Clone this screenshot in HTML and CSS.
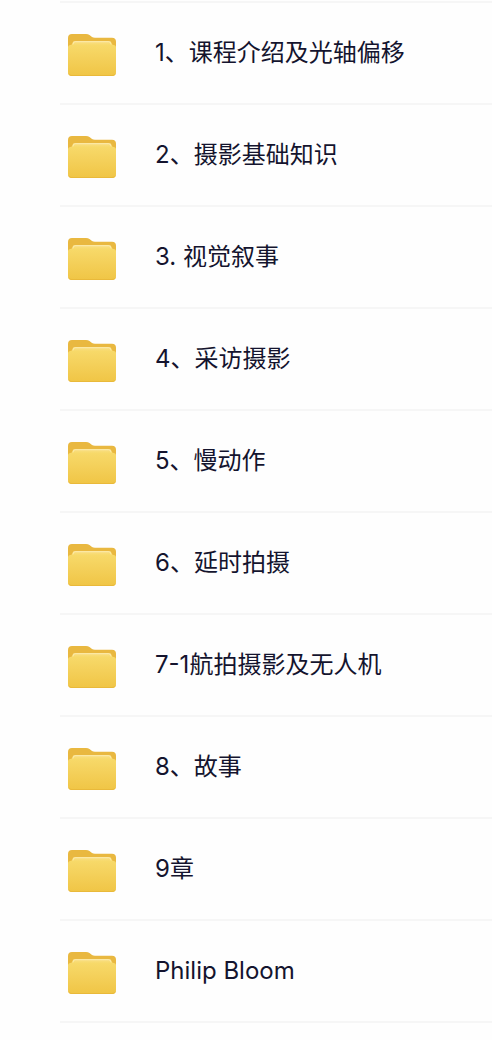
FILE: index.html
```html
<!DOCTYPE html>
<html lang="zh-CN">
<head>
<meta charset="utf-8">
<meta name="viewport" content="width=device-width, initial-scale=1">
<title>课程文件夹</title>
<link rel="stylesheet" href="styles.css">
</head>
<body>
<svg class="defs" width="0" height="0" aria-hidden="true">
  <defs>
    <linearGradient id="front" x1="0" y1="0" x2="0" y2="1">
      <stop offset="0" stop-color="#f9e08a"/>
      <stop offset="0.12" stop-color="#f7d969"/>
      <stop offset="0.5" stop-color="#f4d05a"/>
      <stop offset="1" stop-color="#f0c545"/>
    </linearGradient>
    <symbol id="folder" viewBox="0 0 48 46">
      <path fill="#e9b840" d="M0 8Q0 4 4 4H18Q20 4 21.500 5L24 7Q25 7.800 27 7.800H44Q48 7.800 48 11.800V20H0Z"/>
      <path fill="url(#front)" d="M0 17.500Q0 15 2.500 15Q4.200 15 4.400 13.200Q4.700 11 7 11H41Q43.300 11 43.600 13.200Q43.800 15 45.500 15Q48 15 48 17.500V42Q48 46 44 46H4Q0 46 0 42Z"/>
      <path fill="none" stroke="#fdf0bb" stroke-width="1" stroke-linecap="round" opacity="0.700" d="M5 14Q5 11.700 7.500 11.700H40.500Q43 11.700 43 14"/>
      <path fill="#e9b93a" d="M0 42Q0 46 4 46H44Q48 46 48 42Q47.500 45 44 45H4Q.5 45 0 42Z"/>
    </symbol>
  </defs>
</svg>
<main>
  <ul class="folders">
    <li><a class="row" href="#"><svg class="icon" aria-hidden="true"><use href="#folder"/></svg><span class="name">1、课程介绍及光轴偏移</span></a></li>
    <li><a class="row" href="#"><svg class="icon" aria-hidden="true"><use href="#folder"/></svg><span class="name">2、摄影基础知识</span></a></li>
    <li><a class="row" href="#"><svg class="icon" aria-hidden="true"><use href="#folder"/></svg><span class="name">3. 视觉叙事</span></a></li>
    <li><a class="row" href="#"><svg class="icon" aria-hidden="true"><use href="#folder"/></svg><span class="name">4、采访摄影</span></a></li>
    <li><a class="row" href="#"><svg class="icon" aria-hidden="true"><use href="#folder"/></svg><span class="name">5、慢动作</span></a></li>
    <li><a class="row" href="#"><svg class="icon" aria-hidden="true"><use href="#folder"/></svg><span class="name">6、延时拍摄</span></a></li>
    <li><a class="row" href="#"><svg class="icon" aria-hidden="true"><use href="#folder"/></svg><span class="name">7-1航拍摄影及无人机</span></a></li>
    <li><a class="row" href="#"><svg class="icon" aria-hidden="true"><use href="#folder"/></svg><span class="name">8、故事</span></a></li>
    <li><a class="row" href="#"><svg class="icon" aria-hidden="true"><use href="#folder"/></svg><span class="name">9章</span></a></li>
    <li><a class="row" href="#"><svg class="icon" aria-hidden="true"><use href="#folder"/></svg><span class="name">Philip Bloom</span></a></li>
  </ul>
</main>
</body>
</html>
```

FILE: styles.css
```css
* {
  box-sizing: border-box;
}

body {
  margin: 0;
  background: #fefefe;
  color: #14142e;
  font-family: Inter, "Noto Sans CJK SC", sans-serif;
  font-size: 24px;
  line-height: 36px;
}

.defs {
  position: absolute;
}

.folders {
  list-style: none;
  margin: 1px 0 0 60px;
  padding: 0;
  border-top: 2px solid #f6f6f6;
}

.row {
  display: flex;
  align-items: center;
  gap: 39px;
  min-height: 102px;
  padding: 8px;
  border-bottom: 2px solid #f6f6f6;
  color: inherit;
  text-decoration: none;
}

.icon {
  flex: none;
  width: 48px;
  height: 46px;
}
```
